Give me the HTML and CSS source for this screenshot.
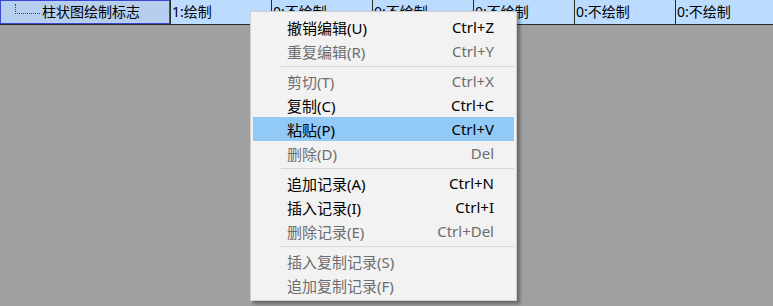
FILE: index.html
```html
<!DOCTYPE html>
<html lang="zh-CN">
<head>
    <meta charset="UTF-8">
    <title>柱状图绘制标志</title>
    <link rel="stylesheet" href="styles.css">
</head>
<body>
    <div class="grid-row">
        <div class="cell name-cell">
            <div class="name-inner">
                <span class="tree-line"></span>
                <span>柱状图绘制标志</span>
            </div>
        </div>
        <div class="cell">1:绘制</div>
        <div class="cell">0:不绘制</div>
        <div class="cell">0:不绘制</div>
        <div class="cell">0:不绘制</div>
        <div class="cell">0:不绘制</div>
        <div class="cell">0:不绘制</div>
        <div class="cell rest"></div>
    </div>

    <ul class="context-menu">
        <li class="item"><span>撤销编辑(U)</span><span>Ctrl+Z</span></li>
        <li class="item disabled"><span>重复编辑(R)</span><span>Ctrl+Y</span></li>
        <li class="sep"></li>
        <li class="item disabled"><span>剪切(T)</span><span>Ctrl+X</span></li>
        <li class="item"><span>复制(C)</span><span>Ctrl+C</span></li>
        <li class="item active"><span>粘贴(P)</span><span>Ctrl+V</span></li>
        <li class="item disabled"><span>删除(D)</span><span>Del</span></li>
        <li class="sep"></li>
        <li class="item"><span>追加记录(A)</span><span>Ctrl+N</span></li>
        <li class="item"><span>插入记录(I)</span><span>Ctrl+I</span></li>
        <li class="item disabled"><span>删除记录(E)</span><span>Ctrl+Del</span></li>
        <li class="sep"></li>
        <li class="item disabled"><span>插入复制记录(S)</span><span></span></li>
        <li class="item disabled"><span>追加复制记录(F)</span><span></span></li>
    </ul>
</body>
</html>
```

FILE: styles.css
```css
body {
    margin: 0;
    padding: 0;
    background: #a0a0a0;
    font-family: "Noto Sans", "Noto Sans CJK SC", sans-serif;
    font-size: 14px;
    color: #000;
    height: 306px;
    overflow: hidden;
}

.grid-row {
    display: flex;
    height: 25px;
    background: #bbdcff;
    border-bottom: 1px solid #2a2a2a;
    box-sizing: border-box;
}

.cell {
    width: 99px;
    flex: none;
    border-right: 1px solid #2a2a2a;
    padding-left: 1px;
    box-sizing: content-box;
    line-height: 23px;
    white-space: nowrap;
    overflow: hidden;
}

.cell.rest {
    flex: 1;
    width: auto;
    border-right: none;
}

.name-cell {
    width: 171px;
    padding: 0;
    background: #b6cfee;
    box-sizing: border-box;
}

.name-inner {
    height: 24px;
    border: 1px solid #3c46d8;
    box-sizing: border-box;
    display: flex;
    align-items: center;
    line-height: 22px;
}

.tree-line {
    display: block;
    width: 24px;
    height: 9px;
    margin: 0 2px 7px 14px;
    border-left: 1px dotted #444;
    border-bottom: 1px dotted #444;
}

.context-menu {
    position: absolute;
    left: 250px;
    top: 11px;
    width: 267px;
    margin: 0;
    padding: 3px 2px;
    list-style: none;
    background: #f2f2f2;
    border: 1px solid #cfcfcf;
    box-sizing: border-box;
    box-shadow: 3px 3px 3px rgba(0, 0, 0, 0.35);
    font-size: 15px;
}

.context-menu .item {
    height: 24px;
    display: flex;
    align-items: center;
    justify-content: space-between;
    padding: 0 20px 0 34px;
}

.context-menu .item.disabled {
    color: #6d6d6d;
}

.context-menu .item.active {
    background: #91c9f7;
}

.context-menu .sep {
    height: 6px;
    display: flex;
    align-items: center;
    padding: 0 0 0 28px;
}

.context-menu .sep::after {
    content: "";
    display: block;
    flex: 1;
    height: 1px;
    background: #d7d7d7;
}
```
